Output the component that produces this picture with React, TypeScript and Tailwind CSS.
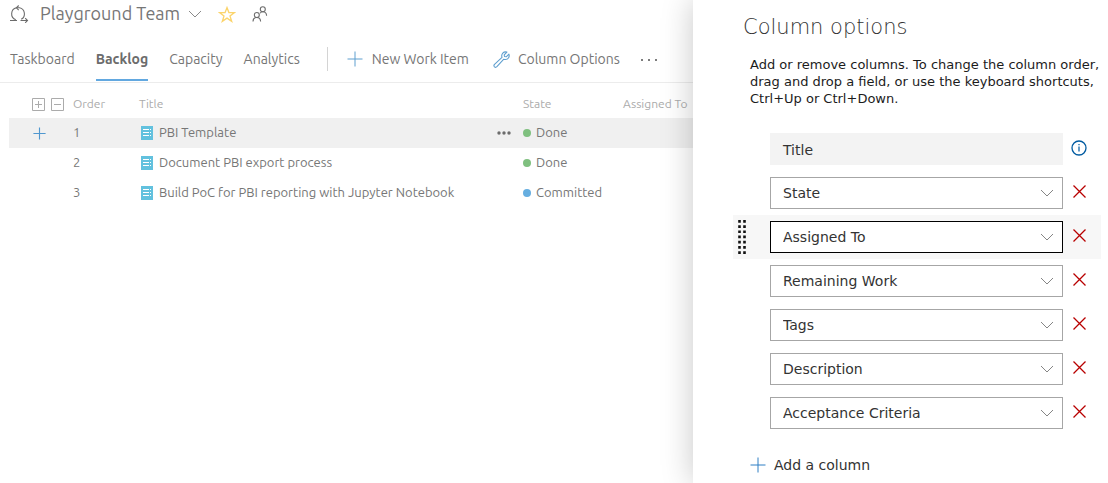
import React, { useState } from "react";

type Item = { order: number; title: string; state: string; dot: string };

const items: Item[] = [
  { order: 1, title: "PBI Template", state: "Done", dot: "bg-[#7fc07f]" },
  { order: 2, title: "Document PBI export process", state: "Done", dot: "bg-[#7fc07f]" },
  { order: 3, title: "Build PoC for PBI reporting with Jupyter Notebook", state: "Committed", dot: "bg-[#66aee0]" },
];

const fields = ["State", "Assigned To", "Remaining Work", "Tags", "Description", "Acceptance Criteria"];

const tabs = ["Taskboard", "Backlog", "Capacity", "Analytics"];

function SprintIcon() {
  return (
    <svg width="19" height="18" viewBox="0 0 19 18" fill="none" stroke="#6c6c6c" strokeWidth="1.1" aria-hidden="true">
      <path d="M0 15.500h7M5.800 14.700A6.200 6.200 0 0 1 6.500 2.800h3A6.200 6.200 0 0 1 11.200 14.300M10.500 15.500h7" />
      <path d="M8.700.5L6.400 2.800l2.300 2.300M15.200 13.200l2.300 2.300-2.300 2.300" />
    </svg>
  );
}

function Chevron({ className }: { className: string }) {
  return (
    <svg className={className} width="14" height="8" viewBox="0 0 14 8" fill="none" stroke="currentColor" aria-hidden="true">
      <path d="M1 1l6 6 6-6" />
    </svg>
  );
}

function StarIcon() {
  return (
    <svg width="18" height="17" viewBox="0 0 18 17" fill="none" stroke="#fbd46c" strokeWidth="1.3" aria-hidden="true">
      <path d="M9 1.6l1.9 5h5.5l-4.4 3.4 1.7 5.3L9 12.1l-4.7 3.2L6 10 1.6 6.6h5.5z" />
    </svg>
  );
}

function PeopleIcon() {
  return (
    <svg width="16" height="16" viewBox="0 0 16 16" fill="none" stroke="#6c6c6c" strokeWidth="1.1" aria-hidden="true">
      <circle cx="10.800" cy="3.200" r="2.500" />
      <path d="M8 7.200c.7-1 1.700-1.500 2.800-1.500 2.200 0 3.700 1.600 3.800 4" />
      <circle cx="4.800" cy="9" r="2.500" />
      <path d="M1 15.400c.1-2.400 1.600-3.900 3.800-3.900s3.700 1.500 3.800 3.900" />
    </svg>
  );
}

function PlusIcon({ className }: { className: string }) {
  return (
    <svg className={className} viewBox="0 0 16 16" fill="none" stroke="currentColor" aria-hidden="true">
      <path d="M8 0.5v15M0.5 8h15" />
    </svg>
  );
}

function WrenchIcon() {
  return (
    <svg width="17" height="17" viewBox="0 0 17 17" fill="none" stroke="#5f9fcf" strokeWidth="1.1" strokeLinejoin="round" aria-hidden="true">
      <path d="M13.9 1.1L11.2 3.8l.3 1.7 1.7.3 2.7-2.7c.9 2.4-.5 5.3-3.5 5.4-.6 0-1.1-.1-1.6-.3l-6.900 7.500c-.7.7-1.7.7-2.400.1-.7-.7-.7-1.700 0-2.400L9 6.400C7.900 3.200 10.600 0 13.900 1.100z" />
    </svg>
  );
}

function BacklogItemIcon() {
  return (
    <svg className="shrink-0" width="12" height="14" viewBox="0 0 12 14" aria-hidden="true">
      <path fill="#62c1de" d="M0 0h12v14H0z" />
      <path stroke="#fff" d="M2 3.500h6M9 3.500h1M2 6.500h6M9 6.500h1M2 9.500h6M9 9.500h1" />
    </svg>
  );
}

function ToggleAllIcon({ expand }: { expand?: boolean }) {
  return (
    <svg width="13" height="13" viewBox="0 0 13 13" fill="none" stroke="#ababab" aria-hidden="true">
      <path d="M.5 .5h12v12H.5zM3 6.500h7" />
      {expand && <path d="M6.500 3v7" />}
    </svg>
  );
}

function Grip() {
  return (
    <svg width="8" height="34" viewBox="0 0 8 34" fill="none" stroke="#111" strokeWidth="2.600" strokeDasharray="2.700 2.500" aria-hidden="true">
      <path d="M1.500 0v34M6.500 0v34" />
    </svg>
  );
}

function ColumnRow({ name, active }: { name: string; active: boolean }) {
  const [value, setValue] = useState(name);
  return (
    <li className={active ? "flex h-11 items-center bg-[#f7f7f7]" : "flex h-11 items-center"}>
      <div className="flex w-[37px] shrink-0 pl-[5px]">{active && <Grip />}</div>
      <div className="relative flex-1">
        <select
          aria-label={`Column ${name}`}
          value={value}
          onChange={(e) => setValue(e.target.value)}
          className={
            active
              ? "block h-8 w-full appearance-none border border-black bg-white px-3 text-sm text-[#333] outline-none"
              : "block h-8 w-full appearance-none border border-[#a6a6a6] bg-white px-3 text-sm text-[#333] outline-none"
          }
        >
          {fields.map((f) => (
            <option key={f}>{f}</option>
          ))}
        </select>
        <Chevron className="pointer-events-none absolute top-3 right-[9px] text-[#858585]" />
      </div>
      <button type="button" aria-label={`Remove ${name}`} className="mb-[3px] flex w-[38px] shrink-0 pl-[10px]">
        <svg width="13" height="13" viewBox="0 0 13 13" fill="none" stroke="#b80000" strokeWidth="1.300" aria-hidden="true">
          <path d="M.5 .5l12 12M12.500 .5l-12 12" />
        </svg>
      </button>
    </li>
  );
}

export default function App() {
  return (
    <div className="flex min-h-screen overflow-hidden bg-white font-['Ubuntu','Noto_Sans',sans-serif] text-[#767676]">
      <main className="min-w-0 flex-1">
        <header className="flex h-7 items-center pl-[10px]">
          <SprintIcon />
          <button type="button" className="ml-[11px] flex items-center gap-2 whitespace-nowrap">
            <h1 className="pb-[2px] text-lg">Playground Team</h1>
            <Chevron className="text-[#8a8a8a]" />
          </button>
          <button type="button" aria-label="Favorite" className="ml-4">
            <StarIcon />
          </button>
          <button type="button" aria-label="Team members" className="ml-4">
            <PeopleIcon />
          </button>
        </header>

        <div className="mt-2 flex h-[47px] items-stretch border-b border-[#ececec] pl-[10px] text-sm whitespace-nowrap">
          <nav className="flex gap-[21px]">
            {tabs.map((t) => (
              <a
                key={t}
                href={`#${t.toLowerCase()}`}
                className={
                  t === "Backlog"
                    ? "mb-px flex items-center border-b-2 border-[#62a8e0] pt-[2px] font-bold text-[#6c6c6c]"
                    : "mb-px flex items-center border-b-2 border-transparent pt-[2px]"
                }
              >
                {t}
              </a>
            ))}
          </nav>
          <div className="my-[11px] ml-[27px] border-l border-[#d4d4d4]" />
          <button type="button" className="ml-[19px] flex items-center gap-[9px]">
            <PlusIcon className="size-4 text-[#5f9fcf]" />
            New Work Item
          </button>
          <button type="button" className="ml-6 flex items-center gap-2">
            <WrenchIcon />
            Column Options
          </button>
          <button type="button" aria-label="More actions" className="ml-5">
            <svg width="18" height="4" viewBox="0 0 18 4" fill="#7d7d7d" aria-hidden="true">
              <path d="M1 2h2v2H1zM8 2h2v2H8zM15 2h2v2h-2z" />
            </svg>
          </button>
        </div>

        <div className="pt-[7px] pl-[9px]">
          <table className="w-full table-fixed text-left text-[13px] whitespace-nowrap">
            <thead>
              <tr className="h-7 text-xs text-[#ababab]">
                <th className="w-16 p-0 pl-[23px]">
                  <div className="flex gap-[6px]">
                    <button type="button" aria-label="Expand all">
                      <ToggleAllIcon expand />
                    </button>
                    <button type="button" aria-label="Collapse all">
                      <ToggleAllIcon />
                    </button>
                  </div>
                </th>
                <th className="w-[66px] p-0 font-normal">Order</th>
                <th className="p-0 font-normal">Title</th>
                <th className="w-[100px] p-0 font-normal">State</th>
                <th className="w-[70px] p-0 font-normal">Assigned To</th>
              </tr>
            </thead>
            <tbody>
              {items.map((it, i) => (
                <tr key={it.order} className={i === 0 ? "h-[30px] bg-[#f0f0f0]" : "h-[30px]"}>
                  <td className="p-0 pl-6">
                    {i === 0 && (
                      <button type="button" aria-label="Add item" className="flex">
                        <PlusIcon className="size-[13px] stroke-[1.4] text-[#4f97cf]" />
                      </button>
                    )}
                  </td>
                  <td className="p-0">{it.order}</td>
                  <td className="p-0">
                    <div className="flex items-center gap-[6px] pr-3 pl-[2px]">
                      <BacklogItemIcon />
                      <span className="flex-1">{it.title}</span>
                      {i === 0 && (
                        <button type="button" aria-label="Item actions">
                          <svg width="14" height="4" viewBox="0 0 14 4" fill="#6c6c6c" aria-hidden="true">
                            <circle cx="2" cy="2" r="1.700" />
                            <circle cx="7" cy="2" r="1.700" />
                            <circle cx="12" cy="2" r="1.700" />
                          </svg>
                        </button>
                      )}
                    </div>
                  </td>
                  <td className="p-0">
                    <div className="flex items-center gap-[5px]">
                      <span className={`size-2 rounded-full ${it.dot}`} />
                      {it.state}
                    </div>
                  </td>
                  <td className="p-0" />
                </tr>
              ))}
            </tbody>
          </table>
        </div>
      </main>

      <aside className="relative w-[415px] shrink-0 bg-white pr-[7px] pl-10 font-['DejaVu_Sans',sans-serif] text-[#333] shadow-[0_0_30px_rgba(0,0,0,0.22)]">
        <h2 className="mt-[13px] ml-[10px] text-[21px] leading-7 font-extralight">Column options</h2>
        <p className="mt-[15px] ml-[17px] text-[13px] leading-[17px] text-[#1c1c1c]">
          Add or remove columns. To change the column order, drag and drop a field, or use the keyboard shortcuts,
          Ctrl+Up or Ctrl+Down.
        </p>
        <ul className="mt-5">
          <li className="flex h-11 items-center pl-[37px]">
            <div className="flex h-8 flex-1 items-center bg-[#f3f3f3] px-[13px] pt-px text-sm">Title</div>
            <button type="button" aria-label="About the Title column" className="mb-[3px] flex w-[38px] shrink-0 pl-2">
              <svg width="16" height="16" viewBox="0 0 16 16" fill="none" stroke="#005ba1" aria-hidden="true">
                <circle cx="8" cy="8" r="7" strokeWidth="1.300" />
                <path d="M8 6.500v5M8 4v1.300" strokeWidth="1.200" />
              </svg>
            </button>
          </li>
          {fields.map((f) => (
            <ColumnRow key={f} name={f} active={f === "Assigned To"} />
          ))}
        </ul>
        <button type="button" className="mt-5 ml-[17px] flex items-center gap-2 text-sm">
          <PlusIcon className="size-4 text-[#2f7fc4]" />
          Add a column
        </button>
      </aside>
    </div>
  );
}
